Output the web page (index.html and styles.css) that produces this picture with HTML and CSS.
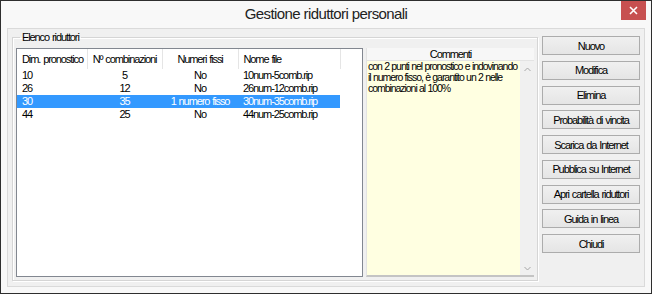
FILE: index.html
```html
<!DOCTYPE html>
<html lang="it">
<head>
    <meta charset="UTF-8">
    <title>Gestione riduttori personali</title>
    <link rel="stylesheet" href="styles.css">
</head>
<body>
    <div class="window">
        <div class="titlebar">
            <span></span>
            <div class="title">Gestione riduttori personali</div>
            <div class="close-wrap">
                <button class="close" type="button">
                    <svg width="9" height="9" viewBox="0 0 9 9"><path d="M1 1 L8 8 M8 1 L1 8" stroke="#fff" stroke-width="1.6"/></svg>
                </button>
            </div>
        </div>

        <div class="client">
            <fieldset class="group">
                <legend>Elenco riduttori</legend>
                <div class="group-body">
                    <div class="listview">
                        <table>
                            <colgroup>
                                <col class="c1"><col class="c2"><col class="c3"><col class="c4">
                            </colgroup>
                            <thead>
                                <tr>
                                    <th class="left">Dim. pronostico</th>
                                    <th>Nº combinazioni</th>
                                    <th>Numeri fissi</th>
                                    <th class="left">Nome file</th>
                                </tr>
                            </thead>
                            <tbody>
                                <tr><td class="left">10</td><td>5</td><td>No</td><td class="left">10num-5comb.rip</td></tr>
                                <tr><td class="left">26</td><td>12</td><td>No</td><td class="left">26num-12comb.rip</td></tr>
                                <tr class="selected"><td class="left">30</td><td>35</td><td>1 numero fisso</td><td class="left">30num-35comb.rip</td></tr>
                                <tr><td class="left">44</td><td>25</td><td>No</td><td class="left">44num-25comb.rip</td></tr>
                            </tbody>
                        </table>
                    </div>

                    <div class="comments">
                        <div class="comments-head">Commenti</div>
                        <div class="comments-body">
                            <div class="comments-text">con 2 punti nel pronostico e indovinando<br>il numero fisso, è garantito un 2 nelle<br>combinazioni al 100%</div>
                            <div class="scrollbar">
                                <svg width="7" height="5" viewBox="0 0 7 5"><path d="M0.5 4 L3.5 1 L6.5 4" fill="none" stroke="#a6a6a6" stroke-width="1"/></svg>
                                <svg width="7" height="5" viewBox="0 0 7 5"><path d="M0.5 1 L3.5 4 L6.5 1" fill="none" stroke="#a6a6a6" stroke-width="1"/></svg>
                            </div>
                        </div>
                    </div>
                </div>
            </fieldset>

            <div class="buttons">
                <button type="button">Nuovo</button>
                <button type="button">Modifica</button>
                <button type="button">Elimina</button>
                <button type="button">Probabilità di vincita</button>
                <button type="button">Scarica da Internet</button>
                <button type="button">Pubblica su Internet</button>
                <button type="button">Apri cartella riduttori</button>
                <button type="button">Guida in linea</button>
                <button type="button">Chiudi</button>
            </div>
        </div>
    </div>
</body>
</html>
```

FILE: styles.css
```css
body {
    margin: 0;
    font-family: "Liberation Sans", Arial, sans-serif;
    font-size: 11px;
    letter-spacing: -1.1px;
    word-spacing: 1px;
    color: #000;
}

.window {
    width: 652px;
    height: 294px;
    box-sizing: border-box;
    border: 1px solid #2e2e2e;
    background-color: #f8f8f8;
    display: flex;
    flex-direction: column;
}

.titlebar {
    height: 27px;
    display: grid;
    grid-template-columns: 1fr auto 1fr;
}

.title {
    font-size: 15px;
    letter-spacing: -0.6px;
    word-spacing: 0;
    line-height: 26px;
    color: #222;
}

.close-wrap {
    display: flex;
    justify-content: flex-end;
    align-items: flex-start;
    padding-right: 5px;
}

.close {
    width: 25px;
    height: 19px;
    border: none;
    padding: 0;
    background-color: #c75050;
    display: flex;
    align-items: center;
    justify-content: center;
}

.client {
    flex: 1;
    margin: 0 6px 6px 6px;
    border: 1px solid #dadada;
    background-color: #f0f0f0;
    display: flex;
    gap: 4px;
    padding: 0 4px;
}

.group {
    width: 526px;
    box-sizing: border-box;
    margin: 2px 0 5px 0;
    padding: 5px 3px 3px 3px;
    border: 1px solid #d5d5d5;
    box-shadow: inset 1px 1px 0 #fff, 1px 1px 0 #fff;
    display: flex;
    flex-direction: column;
    min-width: 0;
}

.group legend {
    margin-left: 4px;
    padding: 0 2px;
    line-height: 12px;
}

.group-body {
    flex: 1;
    display: flex;
    gap: 3px;
}

.listview {
    width: 347px;
    box-sizing: border-box;
    border: 1px solid #828790;
    background-color: #fff;
}

.listview table {
    width: 323px;
    table-layout: fixed;
    border-collapse: collapse;
}

.c1 { width: 70px; }
.c2 { width: 75px; }
.c3 { width: 76px; }
.c4 { width: 102px; }

.listview th {
    height: 20px;
    padding: 0;
    font-weight: normal;
    text-align: center;
    border-right: 1px solid #e5e5e5;
    white-space: nowrap;
}

.listview td {
    height: 13px;
    line-height: 13px;
    padding: 0;
    text-align: center;
    white-space: nowrap;
}

.listview .left {
    text-align: left;
    padding-left: 5px;
}

.listview tr.selected td {
    background-color: #3399ff;
    color: #fff;
}

.comments {
    flex: 1;
    display: flex;
    flex-direction: column;
    border-left: 1px solid #e3e3e3;
    border-bottom: 2px solid #c4c4c4;
}

.comments-head {
    height: 12px;
    line-height: 12px;
    text-align: center;
    background-color: #f7f7f7;
    border-bottom: 1px solid #e3e3e3;
}

.comments-body {
    flex: 1;
    display: flex;
}

.comments-text {
    flex: 1;
    background-color: #ffffe1;
    font-size: 10.5px;
    line-height: 11px;
    letter-spacing: -1.05px;
    word-spacing: 0.5px;
    padding: 0 0 0 1px;
    white-space: nowrap;
}

.scrollbar {
    width: 14px;
    background-color: #f0f0f0;
    display: flex;
    flex-direction: column;
    justify-content: space-between;
    align-items: center;
    padding: 6px 0 4px 0;
}

.buttons {
    width: 98px;
    display: flex;
    flex-direction: column;
    gap: 5.75px;
    padding-top: 7px;
}

.buttons button {
    height: 19px;
    padding: 0;
    border: 1px solid #acacac;
    background: linear-gradient(#f0f0f0, #e5e5e5);
    font-family: "Liberation Sans", Arial, sans-serif;
    font-size: 11px;
    letter-spacing: -1.1px;
    word-spacing: 1px;
    color: #000;
}
```
